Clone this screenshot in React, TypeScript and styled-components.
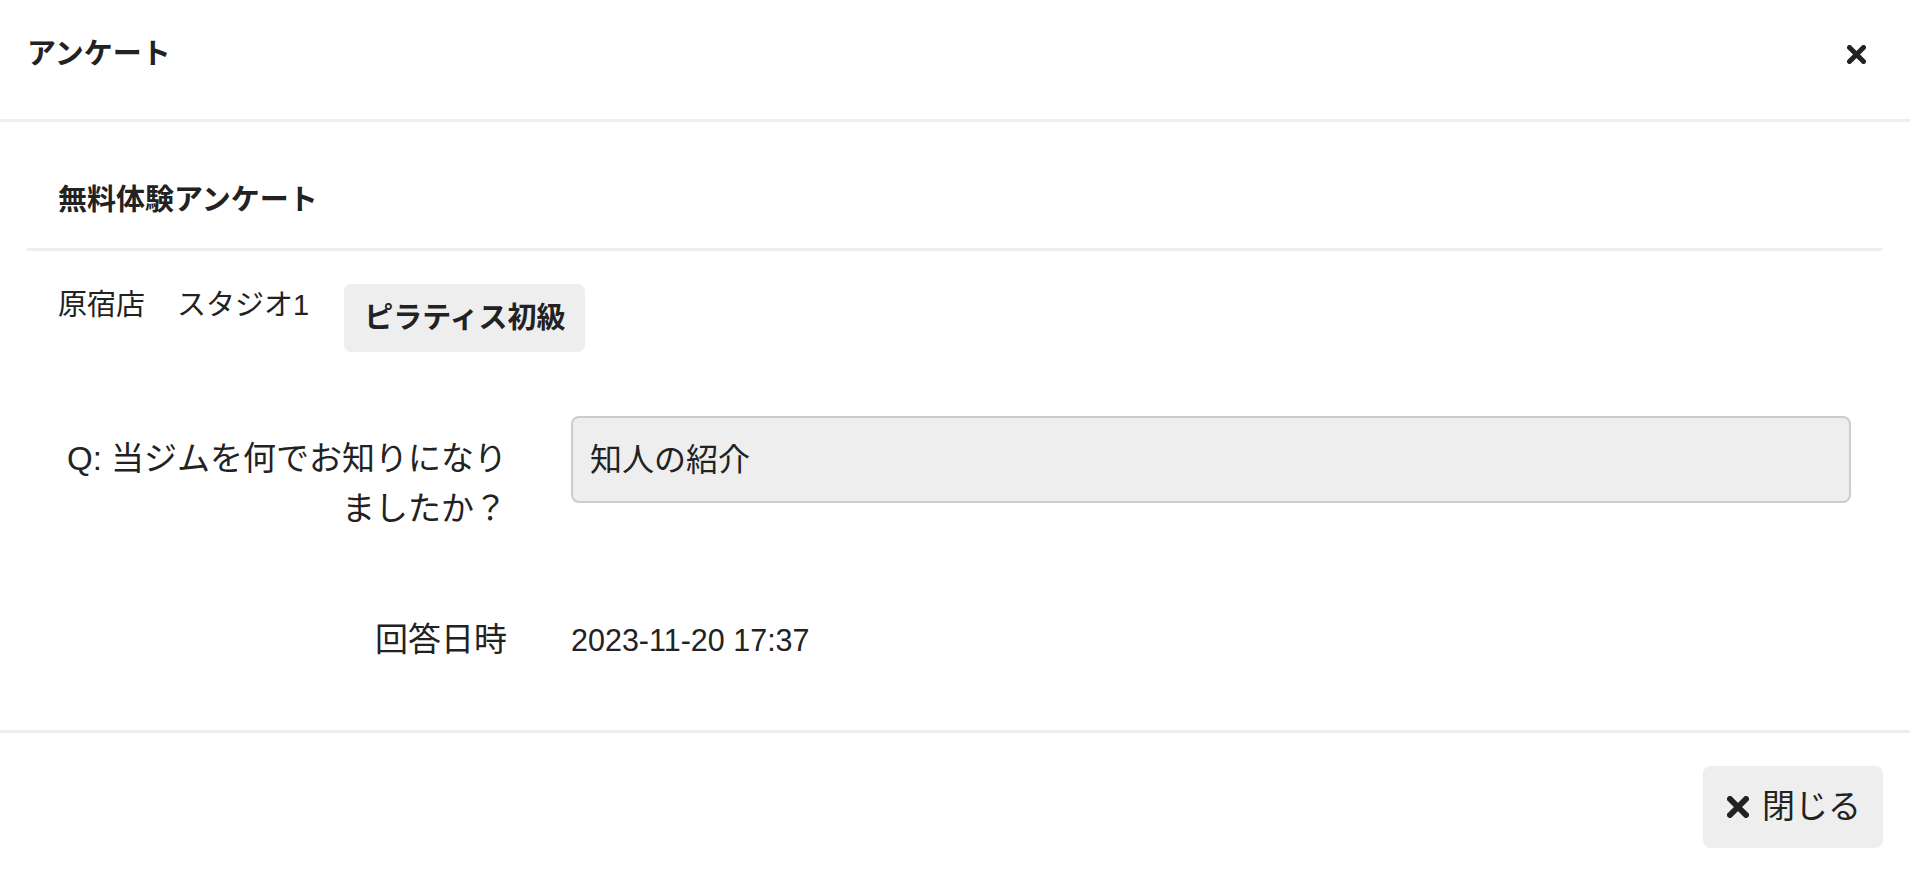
import styled, { createGlobalStyle } from "styled-components";

const GlobalStyle = createGlobalStyle`
  html, body {
    margin: 0;
    padding: 0;
    background: #fff;
  }
  body {
    font-family: "Liberation Sans", "Noto Sans CJK JP", sans-serif;
    color: #222;
  }
  * {
    box-sizing: border-box;
  }
`;

const ModalLayout = styled.div`
  display: flex;
  flex-direction: column;
  width: 1910px;
  min-height: 874px;
  background: #fff;
`;

const Header = styled.div`
  display: flex;
  align-items: flex-start;
  justify-content: space-between;
  height: 122px;
  padding: 33px 44px 0 27px;
  border-bottom: 3px solid #eee;
`;

const HeaderTitle = styled.h4`
  margin: 0;
  font-size: 29px;
  line-height: 42px;
  font-weight: 700;
`;

const CloseBtn = styled.button`
  display: flex;
  align-items: center;
  justify-content: center;
  margin-top: 12px;
  padding: 0;
  border: none;
  background: none;
  color: #222;
  cursor: pointer;
`;

const Body = styled.div`
  padding: 0 28px 65px 27px;
`;

const SectionTitle = styled.div`
  padding: 57px 31px 27px;
  border-bottom: 3px solid #eee;
  font-size: 29px;
  line-height: 42px;
  font-weight: 700;
`;

const InfoRow = styled.div`
  display: flex;
  align-items: flex-start;
  gap: 32px;
  margin-top: 33px;
  padding: 0 31px;
`;

const PlaceText = styled.span`
  font-size: 29px;
  line-height: 42px;
`;

const LessonBadge = styled.span`
  margin-left: 3px;
  padding: 13px 20px;
  border-radius: 7px;
  background: #eee;
  font-size: 29px;
  line-height: 42px;
  font-weight: 700;
`;

const Form = styled.div`
  display: flex;
  flex-direction: column;
  gap: 63px;
  margin-top: 64px;
  padding: 0 31px;
`;

const FormRow = styled.div`
  display: grid;
  grid-template-columns: 449px 1fr;
  column-gap: 64px;
  align-items: start;
`;

const Label = styled.div`
  padding-top: 18px;
  font-size: 33px;
  line-height: 50px;
  text-align: right;
`;

const AnswerBox = styled.div`
  height: 87px;
  padding: 17.5px 17px;
  border: 2px solid #ccc;
  border-radius: 8px;
  background: #eee;
  font-size: 32px;
  line-height: 48px;
`;

const StaticValue = styled.div`
  padding-top: 18px;
  font-size: 30.5px;
  line-height: 50px;
`;

const Footer = styled.div`
  display: flex;
  justify-content: flex-end;
  padding: 33px 27px 26px;
  border-top: 3px solid #eee;
`;

const FooterBtn = styled.button`
  display: flex;
  align-items: center;
  gap: 13px;
  height: 82px;
  padding: 0 22px 0 24px;
  border: none;
  border-radius: 8px;
  background: #eee;
  color: #222;
  font-family: inherit;
  font-size: 33px;
  line-height: 48px;
  cursor: pointer;
`;

function TimesIcon({ size, stroke }: { size: number; stroke: number }) {
  const e = stroke / 2;
  const f = size - stroke / 2;
  return (
    <svg width={size} height={size} viewBox={`0 0 ${size} ${size}`}>
      <path
        d={`M${e} ${e}L${f} ${f}M${f} ${e}L${e} ${f}`}
        stroke="#222"
        strokeWidth={stroke}
        strokeLinecap="round"
        fill="none"
      />
    </svg>
  );
}

const questions = [
  { label: "Q: 当ジムを何でお知りになりましたか？", answer: "知人の紹介" },
];

export default function App() {
  return (
    <>
      <GlobalStyle />
      <ModalLayout>
        <Header>
          <HeaderTitle>アンケート</HeaderTitle>
          <CloseBtn aria-label="close">
            <TimesIcon size={19} stroke={5} />
          </CloseBtn>
        </Header>
        <Body>
          <SectionTitle>無料体験アンケート</SectionTitle>
          <InfoRow>
            <PlaceText>原宿店</PlaceText>
            <PlaceText>スタジオ1</PlaceText>
            <LessonBadge>ピラティス初級</LessonBadge>
          </InfoRow>
          <Form>
            {questions.map(({ label, answer }) => (
              <FormRow key={label}>
                <Label>{label}</Label>
                <AnswerBox>{answer}</AnswerBox>
              </FormRow>
            ))}
            <FormRow>
              <Label>回答日時</Label>
              <StaticValue>2023-11-20 17:37</StaticValue>
            </FormRow>
          </Form>
        </Body>
        <Footer>
          <FooterBtn>
            <TimesIcon size={22} stroke={6} />
            閉じる
          </FooterBtn>
        </Footer>
      </ModalLayout>
    </>
  );
}
